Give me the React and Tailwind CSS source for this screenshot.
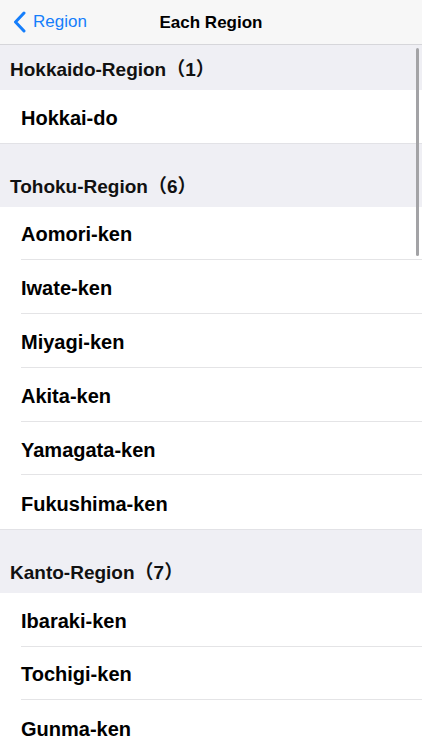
import React from 'react';

// only the rows that fit on the screen are listed
const sections = [
  { title: 'Hokkaido-Region', count: 1, items: ['Hokkai-do'] },
  {
    title: 'Tohoku-Region',
    count: 6,
    items: ['Aomori-ken', 'Iwate-ken', 'Miyagi-ken', 'Akita-ken', 'Yamagata-ken', 'Fukushima-ken'],
  },
  { title: 'Kanto-Region', count: 7, items: ['Ibaraki-ken', 'Tochigi-ken', 'Gunma-ken'] },
];

const font = { fontFamily: '"Liberation Sans", "Noto Sans CJK JP", sans-serif' };

function SectionHeader({ title, count, first }) {
  return (
    <div
      className={
        'flex items-end bg-[#efeff4] pl-[10px] pb-[8px] ' +
        (first ? 'h-[45px]' : 'h-[63.5px] border-t border-[#e2e2e6]')
      }
    >
      <span className="text-[19px] leading-[24px] font-semibold text-[#111]">
        {title}（{count}）
      </span>
    </div>
  );
}

function Row({ label, last, short }) {
  return (
    <div className="pl-[21px] bg-white">
      <div
        className={
          'flex items-center pt-[3px] text-[20px] font-semibold text-black ' +
          (short ? 'h-[53px] ' : 'h-[53.8px] ') +
          (last ? '' : 'border-b border-[#e4e4e6]')
        }
      >
        {label}
      </div>
    </div>
  );
}

export default function App() {
  return (
    <div className="relative w-[422px] h-[750px] overflow-hidden bg-white" style={font}>
      <div className="h-[45px] bg-[#f7f7f7] border-b border-[#d6d6da] grid grid-cols-[1fr_auto_1fr] items-center">
        <div className="flex items-center pl-[13px] gap-[7px] text-[#157efb]">
          <svg width="13" height="22" viewBox="0 0 13 22" fill="none">
            <path d="M11 2 L2.5 11 L11 20" stroke="#157efb" strokeWidth="3" strokeLinecap="round" strokeLinejoin="round" />
          </svg>
          <span className="text-[17px]">Region</span>
        </div>
        <div className="text-[17px] font-semibold text-black pt-[2px]">Each Region</div>
        <div />
      </div>

      {sections.map((s, si) => (
        <div key={s.title}>
          <SectionHeader title={s.title} count={s.count} first={si === 0} />
          {s.items.map((it, i) => (
            <Row key={it} label={it} short={si === 0} last={i === s.items.length - 1} />
          ))}
        </div>
      ))}

      <div className="absolute left-[416px] top-[48px] w-[3px] h-[208px] rounded-full bg-[#a3a3a6]" />
    </div>
  );
}
